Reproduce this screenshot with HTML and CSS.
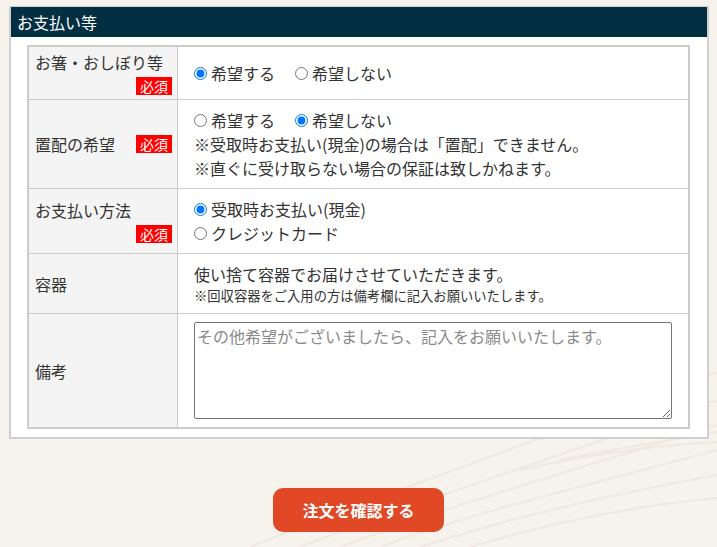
FILE: index.html
```html
<!DOCTYPE html>
<html lang="ja">
<head>
<meta charset="utf-8">
<title>お支払い等</title>
<link rel="stylesheet" href="styles.css">
</head>
<body>
<svg class="bg-waves" width="717" height="547" viewBox="0 0 717 547" aria-hidden="true">
  <g fill="none" stroke="#eee8e0" stroke-width="2">
    <path d="M300 547 C420 500 520 470 717 400"/>
    <path d="M340 547 C450 505 560 475 717 425"/>
    <path d="M380 547 C480 510 590 485 717 450"/>
    <path d="M420 547 C520 515 610 495 717 475"/>
    <path d="M470 547 C560 520 640 505 717 498"/>
    <path d="M250 547 C380 495 500 455 717 372"/>
    <path d="M560 460 C620 448 670 440 717 432"/>
    <path d="M520 470 C600 452 660 445 717 442"/>
  </g>
</svg>
<div class="page">
  <section class="panel">
    <h2 class="panel-title">お支払い等</h2>
    <table class="form-table">
      <tr>
        <th>
          <div class="label stacked"><span>お箸・おしぼり等</span><span class="badge">必須</span></div>
        </th>
        <td>
          <div class="line">
            <label class="opt"><input type="radio" name="chopsticks" checked>希望する</label>
            <label class="opt"><input type="radio" name="chopsticks">希望しない</label>
          </div>
        </td>
      </tr>
      <tr>
        <th>
          <div class="label inline"><span>置配の希望</span><span class="badge">必須</span></div>
        </th>
        <td>
          <div class="line">
            <label class="opt"><input type="radio" name="okihai">希望する</label>
            <label class="opt"><input type="radio" name="okihai" checked>希望しない</label>
          </div>
          <div class="line">※受取時お支払い(現金)の場合は「置配」できません。</div>
          <div class="line">※直ぐに受け取らない場合の保証は致しかねます。</div>
        </td>
      </tr>
      <tr>
        <th>
          <div class="label stacked"><span>お支払い方法</span><span class="badge">必須</span></div>
        </th>
        <td>
          <div class="line"><label class="opt"><input type="radio" name="pay" checked>受取時お支払い(現金)</label></div>
          <div class="line"><label class="opt"><input type="radio" name="pay">クレジットカード</label></div>
        </td>
      </tr>
      <tr>
        <th><div class="label"><span>容器</span></div></th>
        <td>
          <div class="line">使い捨て容器でお届けさせていただきます。</div>
          <div class="line small">※回収容器をご入用の方は備考欄に記入お願いいたします。</div>
        </td>
      </tr>
      <tr>
        <th><div class="label"><span>備考</span></div></th>
        <td class="memo-cell">
          <textarea class="memo" placeholder="その他希望がございましたら、記入をお願いいたします。"></textarea>
        </td>
      </tr>
    </table>
  </section>
  <div class="actions">
    <button class="submit" type="button">注文を確認する</button>
  </div>
</div>
</body>
</html>
```

FILE: styles.css
```css
* { box-sizing: border-box; }

html, body {
  margin: 0;
  padding: 0;
}

body {
  background: #f6f2ec;
  font-family: "Noto Sans CJK JP", "Noto Sans", sans-serif;
  color: #333;
  width: 717px;
  height: 547px;
  overflow: hidden;
  position: relative;
}

.bg-waves {
  position: absolute;
  left: 0;
  top: 0;
  z-index: 0;
}

.page {
  position: relative;
  z-index: 1;
  padding: 6px 0 0 9px;
}

.panel {
  width: 700px;
  background: #fff;
  border: 2px solid #cfcfcf;
  border-top-width: 1px;
  padding-bottom: 8px;
}

.panel-title {
  margin: 0;
  height: 30px;
  background: #022f42;
  color: #fff;
  font-size: 16px;
  font-weight: normal;
  line-height: 30px;
  padding-left: 6px;
}

.form-table {
  margin: 8px 0 0 16px;
  width: 663px;
  border: 2px solid #cccccc;
  border-spacing: 0;
  border-collapse: separate;
}

.form-table th,
.form-table td {
  border-top: 1px solid #cccccc;
  vertical-align: middle;
  font-size: 16px;
  font-weight: normal;
  text-align: left;
}

.form-table tr:first-child th,
.form-table tr:first-child td {
  border-top: none;
}

.form-table th {
  width: 150px;
  background: #f4f4f4;
  border-right: 1px solid #cccccc;
  padding: 4px 5px 4px 6px;
}

.form-table td {
  padding: 8px 16px 8px 16px;
}

.label {
  line-height: 22px;
}

.label > span {
  display: block;
  height: 22px;
}

.label.stacked {
  display: flex;
  flex-direction: column;
  align-items: flex-start;
}

.label.stacked .badge {
  align-self: flex-end;
  margin-top: 4px;
}

.label.inline {
  display: flex;
  justify-content: space-between;
  align-items: center;
}

.label > .badge {
  display: block;
  width: 36px;
  height: 18px;
  line-height: 18px;
  background: #ff0000;
  color: #fff;
  font-size: 14px;
  text-align: center;
}

.line {
  display: flex;
  align-items: center;
  height: 24px;
  line-height: 24px;
  white-space: nowrap;
}

.line.small {
  font-size: 13.3px;
  height: 19px;
  line-height: 19px;
}

.opt {
  display: flex;
  align-items: center;
  margin-right: 20px;
  height: 24px;
}

.opt input {
  margin: 0 4px 0 0;
  width: 13px;
  height: 13px;
}

.memo-cell {
  padding-top: 8px;
  padding-bottom: 8px;
}

.memo {
  display: block;
  width: 478px;
  height: 97px;
  border: 1px solid #767676;
  border-radius: 2px;
  padding: 2px;
  font-family: "Noto Sans CJK JP", "Noto Sans", sans-serif;
  font-size: 16px;
  line-height: 22px;
  color: #333;
  background: #fff;
}

.memo::placeholder {
  color: #8a8a8a;
}

.actions {
  display: flex;
  justify-content: center;
  padding-top: 49px;
  padding-right: 9px;
}

.submit {
  width: 171px;
  height: 44px;
  border: none;
  border-radius: 10px;
  background: #e04826;
  color: #fff;
  font-family: "Noto Sans CJK JP", "Noto Sans", sans-serif;
  font-size: 16px;
  font-weight: bold;
  cursor: pointer;
}
```
